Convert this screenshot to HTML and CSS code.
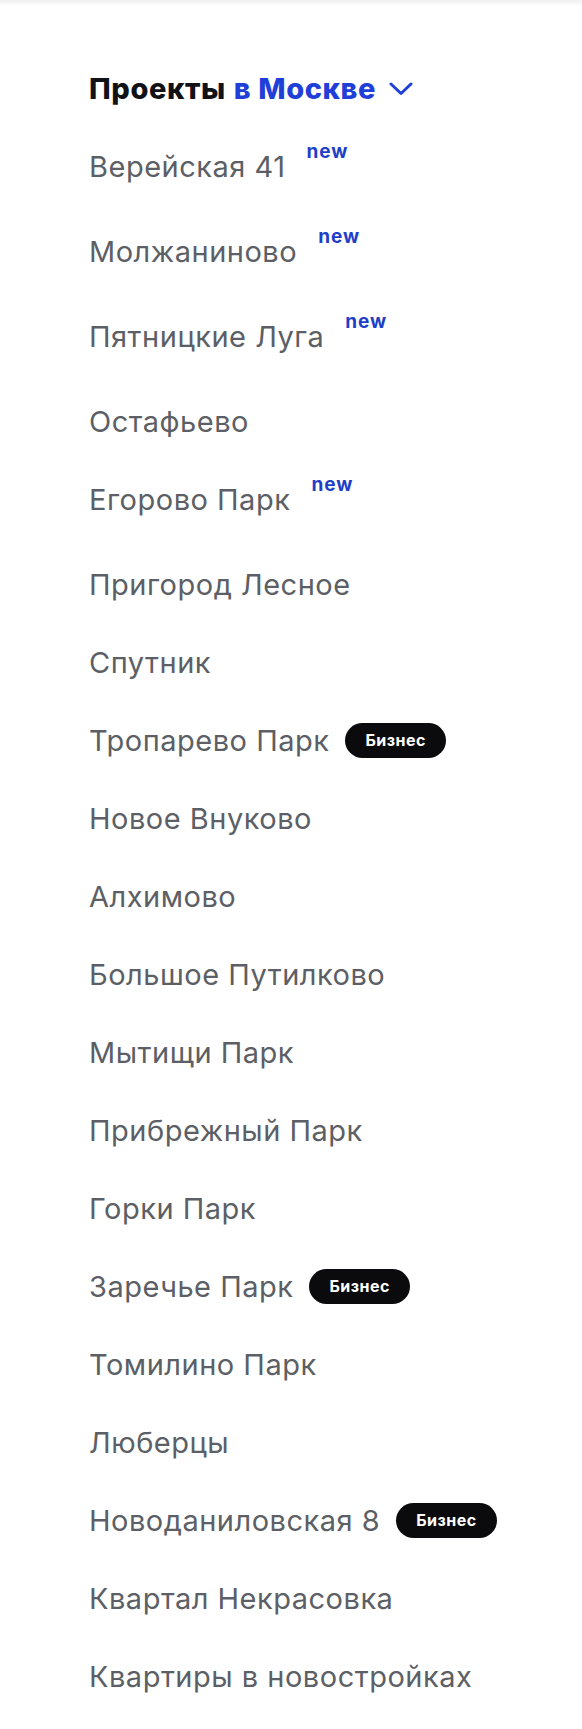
FILE: index.html
```html
<!DOCTYPE html>
<html lang="ru">
<head>
<meta charset="utf-8">
<title>Проекты в Москве</title>
<link rel="stylesheet" href="styles.css">
</head>
<body>
<div class="top-fade"></div>
<nav class="menu">
  <div class="menu-title">
    <span class="title-main">Проекты</span>
    <span class="title-city">в Москве</span>
    <svg class="chevron" width="24" height="14" viewBox="0 0 24 14" aria-hidden="true"><path d="M2 2 L12 11.5 L22 2" fill="none" stroke="#1f3fd8" stroke-width="3" stroke-linecap="round" stroke-linejoin="round"/></svg>
  </div>
  <ul class="list">
    <li class="item item-new"><span class="name">Верейская 41</span><span class="new">new</span></li>
    <li class="item item-new"><span class="name">Молжаниново</span><span class="new">new</span></li>
    <li class="item item-new"><span class="name">Пятницкие Луга</span><span class="new">new</span></li>
    <li class="item"><span class="name">Остафьево</span></li>
    <li class="item item-new"><span class="name">Егорово Парк</span><span class="new">new</span></li>
    <li class="item"><span class="name">Пригород Лесное</span></li>
    <li class="item"><span class="name">Спутник</span></li>
    <li class="item"><span class="name">Тропарево Парк</span><span class="badge">Бизнес</span></li>
    <li class="item"><span class="name">Новое Внуково</span></li>
    <li class="item"><span class="name">Алхимово</span></li>
    <li class="item"><span class="name">Большое Путилково</span></li>
    <li class="item"><span class="name">Мытищи Парк</span></li>
    <li class="item"><span class="name">Прибрежный Парк</span></li>
    <li class="item"><span class="name">Горки Парк</span></li>
    <li class="item"><span class="name">Заречье Парк</span><span class="badge">Бизнес</span></li>
    <li class="item"><span class="name">Томилино Парк</span></li>
    <li class="item"><span class="name">Люберцы</span></li>
    <li class="item"><span class="name">Новоданиловская 8</span><span class="badge">Бизнес</span></li>
    <li class="item"><span class="name">Квартал Некрасовка</span></li>
    <li class="item"><span class="name">Квартиры в новостройках</span></li>
  </ul>
</nav>
</body>
</html>
```

FILE: styles.css
```css
* { box-sizing: border-box; }

html, body {
  margin: 0;
  padding: 0;
  background: #ffffff;
}

body {
  font-family: Inter, "Noto Sans", "Liberation Sans", sans-serif;
  width: 582px;
  min-height: 1729px;
}

.top-fade {
  height: 6px;
  background: linear-gradient(#efefef, #ffffff);
}

.menu {
  padding: 43px 0 0 89px;
}

.menu-title {
  display: flex;
  align-items: center;
  height: 78px;
  font-size: 29px;
  font-weight: 800;
  letter-spacing: 0.6px;
}

.title-main { color: #111216; }

.title-city {
  color: #1f3fd8;
  margin-left: 8px;
}

.chevron {
  margin-left: 13px;
  margin-top: 2px;
}

.list {
  list-style: none;
  margin: 0;
  padding: 0;
}

.item {
  height: 78px;
  display: flex;
  align-items: center;
  font-size: 29px;
  color: #5c5f65;
  letter-spacing: 0.5px;
}

.item-new {
  height: 85px;
  padding-bottom: 7px;
}

.new {
  align-self: flex-start;
  margin: 15px 0 0 21px;
  font-size: 19px;
  font-weight: 700;
  line-height: 1;
  letter-spacing: 1px;
  color: #1f3fc8;
}

.badge {
  margin-left: 16px;
  height: 35px;
  padding: 0 20px;
  display: inline-flex;
  align-items: center;
  border-radius: 18px;
  background: #0b0b0d;
  color: #ffffff;
  font-size: 16px;
  font-weight: 700;
  letter-spacing: 0.5px;
}
```
